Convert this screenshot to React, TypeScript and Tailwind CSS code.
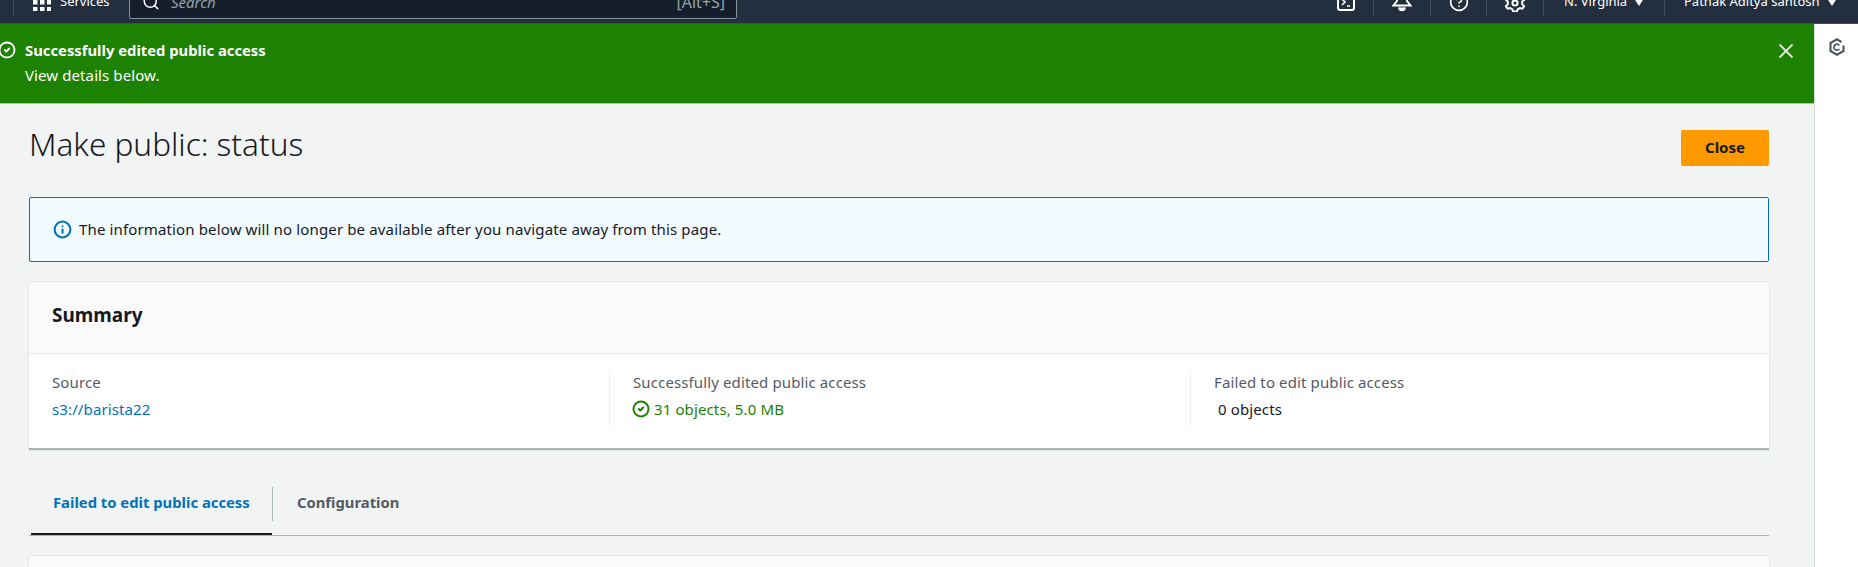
import { CircleCheck, CircleHelp, Info, Search, X } from "lucide-react";

const navDivider = "h-[28px] w-px bg-[#414d5c]";

function GridIcon() {
  return (
    <svg width="18" height="18" viewBox="0 0 18 18" className="fill-white">
      {[0, 7, 14].map((y) =>
        [0, 7, 14].map((x) => <rect key={`${x}-${y}`} x={x} y={y} width="4.5" height="4.5" />)
      )}
    </svg>
  );
}

function ShellIcon() {
  return (
    <svg width="18" height="18" viewBox="0 0 18 18" fill="none" stroke="white" strokeWidth="2">
      <rect x="1" y="1" width="16" height="16" rx="2" />
      <path d="M5 6l3 3-3 3M10 13h3" strokeWidth="1.6" />
    </svg>
  );
}

function BellIcon() {
  return (
    <svg width="20" height="20" viewBox="0 0 20 20" fill="none" stroke="white" strokeWidth="2">
      <path d="M5 9V6a5 5 0 0 1 10 0v3l3.5 4.5h-17z" />
      <path d="M7.2 15.5a2.8 2.8 0 0 0 5.6 0" fill="white" />
    </svg>
  );
}

function GearIcon() {
  return (
    <svg width="20" height="20" viewBox="0 0 20 20" fill="none" stroke="white" strokeWidth="2">
      <path d="M8 1.5h4l.6 2.6 2.3 1.2 2.5-.9 1.8 3.4-2 1.7v2.9l2 1.7-1.8 2.6-2.5-.6-2.3 1.4-.6 1.9H8l-.6-1.9-2.3-1.4-2.5.6-1.8-2.6 2-1.7V9.5l-2-1.7 1.8-3.4 2.5.9 2.3-1.2z" />
      <circle cx="10" cy="11" r="2.6" />
    </svg>
  );
}

function CaretDown() {
  return (
    <svg width="12" height="9" viewBox="0 0 12 9" className="fill-white">
      <path d="M1.5 1h9L6 8z" />
    </svg>
  );
}

function PanelIcon() {
  return (
    <svg width="16" height="18" viewBox="0 0 16 18" fill="none" stroke="#545b64" strokeWidth="2.2">
      <path d="M12.5 4L8 1.3 1.5 5v8L8 16.7l6.5-3.7V7.5" />
      <path d="M10.3 7.4a3 3 0 1 0 0 3.6" strokeWidth="1.8" />
    </svg>
  );
}

function TopNav() {
  return (
    <header className="h-[24px] shrink-0 overflow-hidden border-b border-[#414d5c] bg-[#232f3e] text-white">
      <div className="-mt-[18px] flex h-[40px] items-center">
        <div className={`ml-[13px] ${navDivider}`} />
        <div className="ml-[19px]">
          <GridIcon />
        </div>
        <span className="ml-[9px] w-[69px] text-[13px]">Services</span>
        <div className="flex h-[34px] w-[608px] items-center rounded-[2px] border border-[#879596] bg-[#161e2d] pl-[12px] pr-[11px]">
          <Search size={18} strokeWidth={2} className="text-white" />
          <span className="ml-[11px] flex-1 text-[15px] italic text-[#95a5a6]">Search</span>
          <span className="text-[16px] text-[#95a5a6]">[Alt+S]</span>
        </div>
        <div className="ml-auto flex items-center">
          <div className="flex w-[80px] justify-end pr-[18px]">
            <ShellIcon />
          </div>
          <div className={navDivider} />
          <div className="flex w-[56px] justify-center">
            <BellIcon />
          </div>
          <div className={navDivider} />
          <div className="flex w-[55px] justify-center">
            <CircleHelp size={20} strokeWidth={2} />
          </div>
          <div className={navDivider} />
          <div className="flex w-[56px] justify-center">
            <GearIcon />
          </div>
          <div className={navDivider} />
          <div className="flex w-[120px] items-center pl-[20px]">
            <span className="text-[13px]">N. Virginia</span>
            <span className="ml-[6px]">
              <CaretDown />
            </span>
          </div>
          <div className={navDivider} />
          <div className="flex w-[193px] items-center pl-[19px]">
            <span className="text-[13px]">Pathak Aditya santosh</span>
            <span className="ml-[6px]">
              <CaretDown />
            </span>
          </div>
        </div>
      </div>
    </header>
  );
}

function FlashBar() {
  return (
    <div className="flex h-[80px] shrink-0 items-start border-b border-[#b8bcbc] bg-[#1d8102] pt-[14px] text-[15px] text-white">
      <CircleCheck size={18} strokeWidth={2.4} className="ml-[-2px] mt-[3px]" />
      <div className="ml-[9px] flex-1 leading-[25px]">
        <div className="text-[14.8px] font-bold">Successfully edited public access</div>
        <div className="tracking-[0.1px]">View details below.</div>
      </div>
      <X size={24} strokeWidth={1.8} className="mr-[16px] mt-[1px] text-[#e3e8e2]" />
    </div>
  );
}

function SummaryColumn({ label, children, divider }: { label: string; children: React.ReactNode; divider?: boolean }) {
  return (
    <div className={`flex-1 pl-[23px] ${divider ? "border-l border-[#eaeded]" : ""}`}>
      <div className="text-[15px] leading-[20px] tracking-[0.12px] text-[#545b64]">{label}</div>
      <div className="mt-[7px] flex items-center text-[15px] leading-[20px] tracking-[0.12px]">{children}</div>
    </div>
  );
}

export default function App() {
  return (
    <div
      className="flex h-[567px] flex-col overflow-hidden bg-[#f2f3f3] text-[#16191f]"
      style={{ fontFamily: '"Noto Sans", "Liberation Sans", sans-serif' }}
    >
      <TopNav />
      <div className="flex min-h-0 flex-1">
        <main className="flex min-w-0 flex-1 flex-col">
          <FlashBar />
          <div className="flex-1 px-[29px] pr-[45px]">
            <div className="flex h-[93px] items-start justify-between pt-[26px]">
              <h1 className="-mt-[4px] text-[31.5px] font-light leading-[36px]">Make public: status</h1>
              <button className="h-[36px] w-[88px] rounded-[2px] bg-[#ff9900] pb-[1px] text-[15px] font-bold text-[#16191f]">Close</button>
            </div>
            <div className="flex h-[65px] items-center rounded-[2px] border border-[#0073bb] bg-[#f1faff] pl-[23px] text-[15px] tracking-[0.14px]">
              <Info size={19} strokeWidth={2.6} className="text-[#0073bb]" />
              <span className="ml-[7px]">The information below will no longer be available after you navigate away from this page.</span>
            </div>
            <section className="mt-[20px] h-[168px] border-b-2 border-[#a9b2b5] bg-white shadow-[0_0_1px_rgba(0,28,36,0.3)]">
              <div className="flex h-[72px] items-center border-b border-[#eaeded] bg-[#fafafa] pb-[4px] pl-[23px]">
                <h2 className="text-[19px] font-bold">Summary</h2>
              </div>
              <div className="mt-[18px] flex h-[54px]">
                <div className="flex w-[580px]">
                  <SummaryColumn label="Source">
                    <span className="text-[#0073bb]">s3://barista22</span>
                  </SummaryColumn>
                </div>
                <div className="flex w-[581px]">
                  <SummaryColumn label="Successfully edited public access" divider>
                    <CircleCheck size={18} strokeWidth={2.6} className="mr-[4px] -ml-[1px] text-[#1d8102]" />
                    <span className="text-[#1d8102]">31 objects, 5.0 MB</span>
                  </SummaryColumn>
                </div>
                <div className="flex flex-1">
                  <SummaryColumn label="Failed to edit public access" divider>
                    <span className="pl-[4px]">0 objects</span>
                  </SummaryColumn>
                </div>
              </div>
            </section>
            <nav className="mt-[36px] flex h-[50px] border-b border-[#aab7b8] text-[14.8px] font-bold">
              <div className="ml-[2px] flex h-[49px] w-[241px] items-start border-b-2 border-[#16191f] pl-[22px] pt-[6px] text-[#0073bb]">
                <span className="leading-[20px]">Failed to edit public access</span>
              </div>
              <div className="mt-[1px] h-[34px] w-px bg-[#aab7b8]" />
              <div className="pl-[24px] pt-[6px] leading-[20px] text-[#545b64]">Configuration</div>
            </nav>
            <div className="mt-[20px] h-[60px] bg-[#fafafa] shadow-[0_0_1px_rgba(0,28,36,0.3)]" />
          </div>
        </main>
        <aside className="w-[44px] shrink-0 border-l border-[#d5dbdb] bg-white">
          <div className="mt-[14px] flex justify-center">
            <PanelIcon />
          </div>
        </aside>
      </div>
    </div>
  );
}
